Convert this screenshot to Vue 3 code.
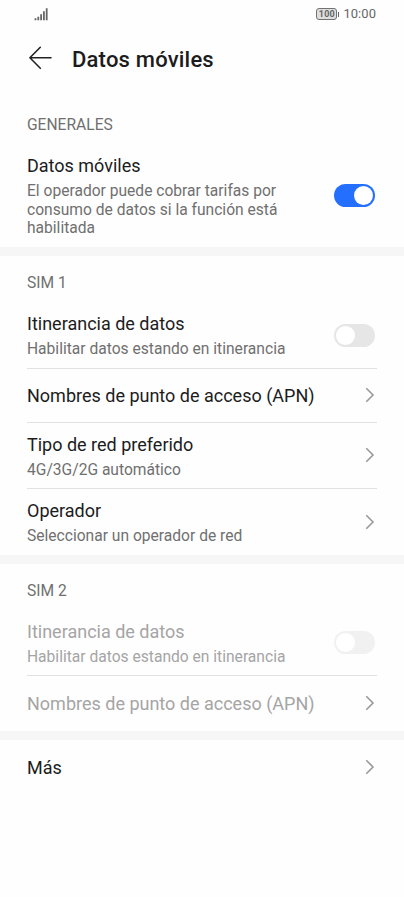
<script setup>
const groups = [
  {
    id: 'general',
    caption: 'GENERALES',
    rows: [
      {
        title: 'Datos móviles',
        sub: 'El operador puede cobrar tarifas por consumo de datos si la función está habilitada',
        toggle: true, on: true, size: 'tall',
      },
    ],
  },
  {
    id: 'sim1',
    caption: 'SIM 1',
    rows: [
      { title: 'Itinerancia de datos', sub: 'Habilitar datos estando en itinerancia', toggle: true, size: 'first' },
      { title: 'Nombres de punto de acceso (APN)', size: 'single' },
      { title: 'Tipo de red preferido', sub: '4G/3G/2G automático', size: 'double' },
      { title: 'Operador', sub: 'Seleccionar un operador de red', size: 'double' },
    ],
  },
  {
    id: 'sim2',
    caption: 'SIM 2',
    disabled: true,
    rows: [
      { title: 'Itinerancia de datos', sub: 'Habilitar datos estando en itinerancia', toggle: true, size: 'first' },
      { title: 'Nombres de punto de acceso (APN)', size: 'single' },
    ],
  },
  { id: 'more', rows: [{ title: 'Más', size: 'single' }] },
]
</script>

<template>
  <main class="screen">
    <div class="status">
      <svg class="signal" width="14" height="13" viewBox="0 0 14 13">
        <path d="M1.5 10.3V12.3M4.3 8.8V12.3M7.1 6.2V12.3M9.9 3.2V12.3M12.7 0.3V12.3" stroke="#666" stroke-width="1.8" />
      </svg>
      <div class="right">
        <span class="battery">100</span><span class="tip"></span>
        <span class="clock">10:00</span>
      </div>
    </div>
    <header class="header">
      <svg width="24" height="24" viewBox="0 0 24 24" fill="none" stroke="#222" stroke-width="1.6" stroke-linecap="round" stroke-linejoin="round">
        <path d="M23 11.8H2M12.3 1.3L1.9 11.8L12.3 22.3" />
      </svg>
      <h1>Datos móviles</h1>
    </header>
    <section v-for="g in groups" :key="g.id" class="group" :class="[g.id, { disabled: g.disabled }]">
      <h2 v-if="g.caption">{{ g.caption }}</h2>
      <div v-for="r in g.rows" :key="r.title" class="row" :class="r.size">
        <div class="text">
          <div class="title">{{ r.title }}</div>
          <div v-if="r.sub" class="sub">{{ r.sub }}</div>
        </div>
        <span v-if="r.toggle" class="switch" :class="{ on: r.on }"><i></i></span>
        <svg v-else class="chevron" width="10" height="16" viewBox="0 0 10 16" fill="none" stroke="#999" stroke-width="1.6">
          <path d="M1.3 1.2L8 8L1.3 14.8" />
        </svg>
      </div>
    </section>
  </main>
</template>

<style>
body { background: #fefefe; }
</style>

<style scoped>
* { box-sizing: border-box; }
.screen {
  width: 404px;
  height: 897px;
  overflow: hidden;
  background: #fefefe;
  color: #1c1c1c;
  font-family: Roboto, sans-serif;
}
.status {
  height: 28px;
  padding: 0 28px 0 34px;
  display: flex;
  align-items: center;
  justify-content: space-between;
}
.right { display: flex; align-items: center; color: #666; }
.battery {
  width: 21px;
  height: 12px;
  border: 1px solid #737373;
  border-radius: 3px;
  background: #dedede;
  font-size: 9px;
  font-weight: 700;
  line-height: 10.5px;
  text-align: center;
  letter-spacing: 0.3px;
}
.tip { width: 1px; height: 5px; margin: 0 4px 0 1px; background: #666; }
.clock { font-size: 12.9px; line-height: 14px; letter-spacing: 0.1px; }
.header {
  height: 62px;
  padding: 0 0 1px 28px;
  display: flex;
  align-items: center;
  gap: 20px;
}
.header svg { margin-bottom: 1px; }
h1 { margin: 0; font-size: 22px; font-weight: 500; letter-spacing: 0.2px; line-height: 28px; padding-top: 2px; }
.group { border-bottom: 9px solid #f6f6f6; }
.general { height: 166px; padding-top: 8px; }
.sim2 { height: 176px; }
.more { border-bottom: 0; }
h2 {
  margin: 0;
  height: 53px;
  padding-left: 27px;
  font-size: 15.6px;
  font-weight: 400;
  line-height: 55px;
  color: #707070;
}
.row {
  margin: 0 27px;
  display: flex;
  align-items: center;
  justify-content: space-between;
  border-bottom: 1px solid #e2e2e2;
}
.row:last-child { border-bottom: 0; }
.tall { height: 96px; padding-bottom: 8px; }
.tall .text { padding-top: 2px; }
.first { height: 60px; padding-bottom: 7px; }
.sim2 .first { height: 59px; padding-bottom: 6px; }
.sim2 .first .switch { margin-bottom: 1px; }
.single { height: 54px; }
.sim2 .single { height: 55px; }
.more .single { height: 55px; }
.double { height: 66px; }
.double .text { padding-top: 1px; }
.title { font-size: 18px; line-height: 24px; white-space: nowrap; }
.sub { margin-top: 4px; width: 264px; font-size: 15.6px; line-height: 18.6px; color: #707070; }
.disabled .title, .disabled .sub { color: #a5a5a5; }
.switch { width: 41px; height: 23px; margin-right: 2px; padding: 2px; border-radius: 12px; background: #e6e6e6; display: flex; }
.switch i { width: 19px; height: 19px; border-radius: 50%; background: #fff; }
.switch.on { background: #256fff; justify-content: flex-end; }
.disabled .switch { background: #f1f1f1; }
.chevron { margin: 0 2px 1px 0; }
</style>
